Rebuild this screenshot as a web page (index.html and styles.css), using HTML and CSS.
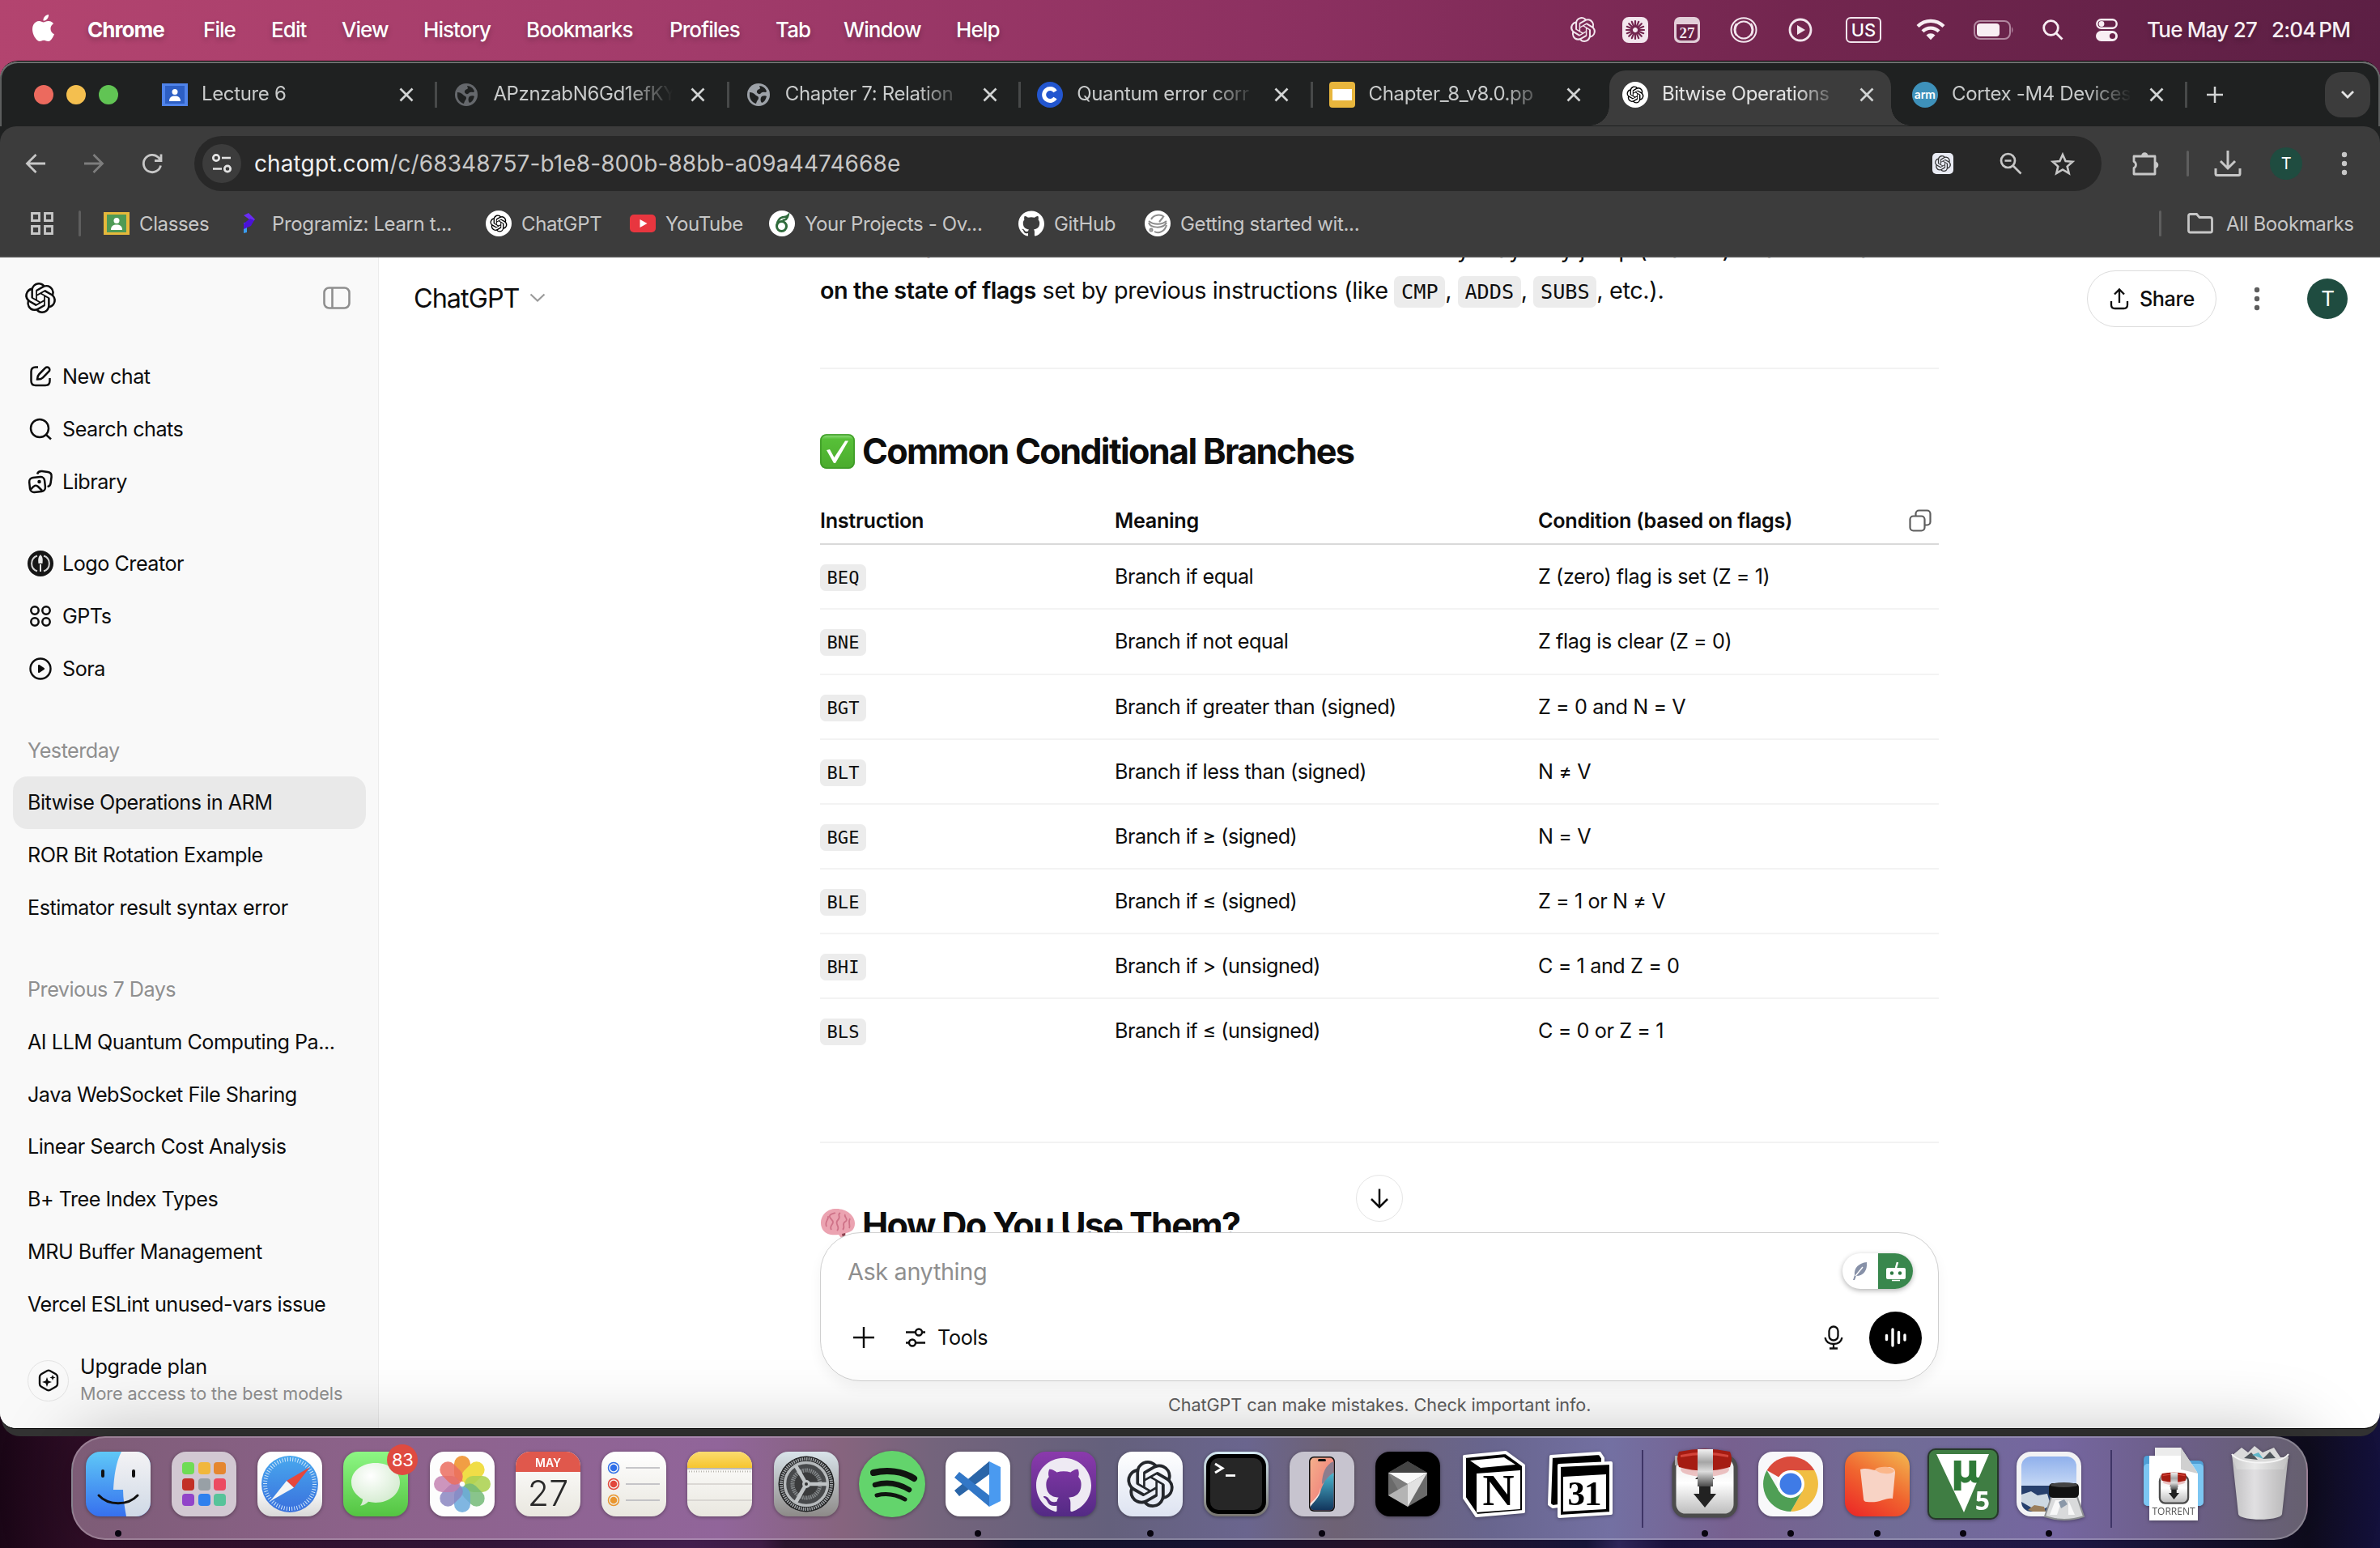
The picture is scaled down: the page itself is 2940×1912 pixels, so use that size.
FILE: index.html
```html
<!DOCTYPE html>
<html lang="en">
<head>
<meta charset="utf-8">
<title>Bitwise Operations in ARM</title>
<link rel="stylesheet" href="styles.css">
</head>
<body>
<svg class="defs" width="0" height="0" aria-hidden="true">
  <defs>
    <symbol id="openai" viewBox="0 0 24 24"><path d="M22.2819 9.8211a5.9847 5.9847 0 0 0-.5157-4.9108 6.0462 6.0462 0 0 0-6.5098-2.9A6.0651 6.0651 0 0 0 4.9807 4.1818a5.9847 5.9847 0 0 0-3.9977 2.9 6.0462 6.0462 0 0 0 .7427 7.0966 5.98 5.98 0 0 0 .511 4.9107 6.051 6.051 0 0 0 6.5146 2.9001A5.9847 5.9847 0 0 0 13.2599 24a6.0557 6.0557 0 0 0 5.7718-4.2058 5.9894 5.9894 0 0 0 3.9977-2.9001 6.0557 6.0557 0 0 0-.7475-7.0729zm-9.022 12.6081a4.4755 4.4755 0 0 1-2.8764-1.0408l.1419-.0804 4.7783-2.7582a.7948.7948 0 0 0 .3927-.6813v-6.7369l2.02 1.1686a.071.071 0 0 1 .038.052v5.5826a4.504 4.504 0 0 1-4.4945 4.4944zm-9.6607-4.1254a4.4708 4.4708 0 0 1-.5346-3.0137l.142.0852 4.783 2.7582a.7712.7712 0 0 0 .7806 0l5.8428-3.3685v2.3324a.0804.0804 0 0 1-.0332.0615L9.74 19.9502a4.4992 4.4992 0 0 1-6.1408-1.6464zM2.3408 7.8956a4.485 4.485 0 0 1 2.3655-1.9728V11.6a.7664.7664 0 0 0 .3879.6765l5.8144 3.3543-2.0201 1.1685a.0757.0757 0 0 1-.071 0l-4.8303-2.7865A4.504 4.504 0 0 1 2.3408 7.872zm16.5963 3.8558L13.1038 8.364 15.1192 7.2a.0757.0757 0 0 1 .071 0l4.8303 2.7913a4.4944 4.4944 0 0 1-.6765 8.1042v-5.6772a.79.79 0 0 0-.407-.667zm2.0107-3.0231l-.142-.0852-4.7735-2.7818a.7759.7759 0 0 0-.7854 0L9.409 9.2297V6.8974a.0662.0662 0 0 1 .0284-.0615l4.8303-2.7866a4.4992 4.4992 0 0 1 6.6802 4.66zM8.3065 12.863l-2.02-1.1638a.0804.0804 0 0 1-.038-.0567V6.0742a4.4992 4.4992 0 0 1 7.3757-3.4537l-.142.0805L8.704 5.459a.7948.7948 0 0 0-.3927.6813zm1.0976-2.3654l2.602-1.4998 2.6069 1.4998v2.9994l-2.5974 1.4997-2.6067-1.4997Z"/></symbol>
    <symbol id="github" viewBox="0 0 24 24"><path d="M12 .297c-6.63 0-12 5.373-12 12 0 5.303 3.438 9.8 8.205 11.385.6.113.82-.258.82-.577 0-.285-.01-1.04-.015-2.04-3.338.724-4.042-1.61-4.042-1.61C4.422 18.07 3.633 17.7 3.633 17.7c-1.087-.744.084-.729.084-.729 1.205.084 1.838 1.236 1.838 1.236 1.07 1.835 2.809 1.305 3.495.998.108-.776.417-1.305.76-1.605-2.665-.3-5.466-1.332-5.466-5.93 0-1.31.465-2.38 1.235-3.22-.135-.303-.54-1.523.105-3.176 0 0 1.005-.322 3.3 1.23.96-.267 1.98-.399 3-.405 1.02.006 2.04.138 3 .405 2.28-1.552 3.285-1.23 3.285-1.23.645 1.653.24 2.873.12 3.176.765.84 1.23 1.91 1.23 3.22 0 4.61-2.805 5.625-5.475 5.92.42.36.81 1.096.81 2.22 0 1.606-.015 2.896-.015 3.286 0 .315.21.69.825.57C20.565 22.092 24 17.592 24 12.297c0-6.627-5.373-12-12-12"/></symbol>
    <symbol id="close" viewBox="0 0 24 24"><path d="M4.5 4.500l15 15M19.500 4.500l-15 15" fill="none" stroke="#d2d4d4" stroke-width="2.700"/></symbol>
    <symbol id="globe" viewBox="0 0 28 28"><circle cx="14" cy="14" r="14" fill="currentColor"/><path d="M3 11c3 0 5 1 7 3 1 2 4 1 4 4 0 2-2 3-3 7-4-1-8-5-8-10zM15 3c4 0 8 3 9 7-2 2-3 0-5 1-2 0-2 3-5 2-2-1-3-3-1-5 1-1 3-1 3-2zM18 16c2-1 5-1 6 0-1 4-3 7-6 8-2-2-2-6 0-8z" fill="#1f2121"/></symbol>
    <symbol id="transmission" viewBox="0 0 80 80">
      <rect x="2" y="6" width="76" height="73" rx="14" fill="url(#metal)" stroke="#4c4c4c" stroke-width="5"/>
      <ellipse cx="40" cy="22" rx="30" ry="9" fill="#c22" opacity=".25"/>
      <path d="M40 22l12 12h-5v18h7L40 69 26 52h7V34h-5z" fill="#222"/>
      <path d="M3 5h8v12H3z" fill="#aaa"/>
      <path d="M8 0Q40-7 71 0Q75 8 71 19Q40 28 8 19Q4 8 8 0z" fill="#a51c12"/>
      <path d="M10 4Q40-3 69 4v3Q40 1 10 7z" fill="#d4453a"/>
      <path d="M31-3h19v46H31z" fill="url(#steel)"/>
    </symbol>
    <linearGradient id="metal" x1="0" y1="0" x2="0" y2="1"><stop offset="0" stop-color="#e8e8e8"/><stop offset=".45" stop-color="#fff"/><stop offset="1" stop-color="#b9b9b9"/></linearGradient>
    <linearGradient id="steel" x1="0" y1="0" x2="0" y2="1"><stop offset="0" stop-color="#f2f2f2"/><stop offset=".35" stop-color="#a5a5a5"/><stop offset=".6" stop-color="#ddd"/><stop offset="1" stop-color="#4a4a4a"/></linearGradient>
    <linearGradient id="g-finder" x1="0" y1="0" x2="0" y2="1"><stop offset="0" stop-color="#5fc8f7"/><stop offset="1" stop-color="#3670ee"/></linearGradient>
    <linearGradient id="g-face" x1="0" y1="0" x2="0" y2="1"><stop offset="0" stop-color="#f4f3f5"/><stop offset="1" stop-color="#cfd9e6"/></linearGradient>
    <linearGradient id="g-white" x1="0" y1="0" x2="0" y2="1"><stop offset="0" stop-color="#fff"/><stop offset=".6" stop-color="#fafafa"/><stop offset="1" stop-color="#d8d8d8"/></linearGradient>
    <linearGradient id="g-blue" x1="0" y1="0" x2="0" y2="1"><stop offset="0" stop-color="#48a8ee"/><stop offset="1" stop-color="#3a70dd"/></linearGradient>
    <linearGradient id="g-green" x1="0" y1="0" x2="0" y2="1"><stop offset="0" stop-color="#8df784"/><stop offset="1" stop-color="#54c442"/></linearGradient>
    <radialGradient id="g-bubble" cx=".4" cy=".3" r=".8"><stop offset="0" stop-color="#fff"/><stop offset="1" stop-color="#cde8c8"/></radialGradient>
    <linearGradient id="g-note" x1="0" y1="0" x2="0" y2="1"><stop offset="0" stop-color="#fbdc6f"/><stop offset="1" stop-color="#f6c52f"/></linearGradient>
    <linearGradient id="g-paper" x1="0" y1="0" x2="0" y2="1"><stop offset="0" stop-color="#fff"/><stop offset="1" stop-color="#e9e7df"/></linearGradient>
    <linearGradient id="g-set" x1="0" y1="0" x2="0" y2="1"><stop offset="0" stop-color="#d9e4ea"/><stop offset="1" stop-color="#8d8a88"/></linearGradient>
    <linearGradient id="g-gh" x1="0" y1="0" x2="0" y2="1"><stop offset="0" stop-color="#8b3aac"/><stop offset="1" stop-color="#532a84"/></linearGradient>
    <linearGradient id="g-ai" x1="0" y1="0" x2="0" y2="1"><stop offset="0" stop-color="#fff"/><stop offset="1" stop-color="#dde3f1"/></linearGradient>
    <linearGradient id="g-term" x1="0" y1="0" x2="0" y2="1"><stop offset="0" stop-color="#d5eaf3"/><stop offset="1" stop-color="#76736f"/></linearGradient>
    <linearGradient id="g-cup" x1=".8" y1="0" x2=".2" y2="1"><stop offset="0" stop-color="#f2ad4b"/><stop offset=".5" stop-color="#f0652f"/><stop offset="1" stop-color="#ec2d27"/></linearGradient>
    <linearGradient id="g-sky" x1="0" y1="0" x2="0" y2="1"><stop offset="0" stop-color="#8fb0ec"/><stop offset="1" stop-color="#c5d8f5"/></linearGradient>
    <linearGradient id="g-check" x1="0" y1="0" x2="0" y2="1"><stop offset="0" stop-color="#9be38a"/><stop offset=".15" stop-color="#57c038"/><stop offset="1" stop-color="#4bab2d"/></linearGradient>
    <linearGradient id="g-phone" x1="0" y1="0" x2="1" y2="1"><stop offset="0" stop-color="#f5b08c"/><stop offset="1" stop-color="#ee6d74"/></linearGradient>
    <linearGradient id="g-sea" x1="0" y1="0" x2="0" y2="1"><stop offset="0" stop-color="#4cb8d0"/><stop offset="1" stop-color="#12355c"/></linearGradient>
    <linearGradient id="g-bin" x1="0" y1="0" x2="1" y2="0"><stop offset="0" stop-color="#c9c9c9"/><stop offset=".4" stop-color="#ececec"/><stop offset="1" stop-color="#bfbfbf"/></linearGradient>
  </defs>
</svg>

<header class="menubar">
  <nav class="menus">
    <svg class="apple" viewBox="2 0 20 24"><path fill="#fff" d="M12.152 6.896c-.948 0-2.415-1.078-3.96-1.04-2.04.027-3.91 1.183-4.961 3.014-2.117 3.675-.546 9.103 1.519 12.09 1.013 1.454 2.208 3.09 3.792 3.039 1.52-.065 2.09-.987 3.935-.987 1.831 0 2.35.987 3.96.948 1.637-.026 2.676-1.48 3.676-2.948 1.156-1.688 1.636-3.325 1.662-3.415-.039-.013-3.182-1.221-3.22-4.857-.026-3.04 2.48-4.494 2.597-4.559-1.429-2.09-3.623-2.324-4.39-2.376-2-.156-3.675 1.09-4.61 1.09zM15.53 3.83c.843-1.012 1.4-2.427 1.245-3.83-1.207.052-2.662.805-3.532 1.818-.78.896-1.454 2.338-1.273 3.714 1.338.104 2.715-.688 3.559-1.701"/></svg>
    <b>Chrome</b><span>File</span><span>Edit</span><span>View</span><span>History</span><span>Bookmarks</span><span>Profiles</span><span>Tab</span><span>Window</span><span>Help</span>
  </nav>
  <div class="status">
    <svg width="31" height="31"><use href="#openai" fill="#f3e6ee"/></svg>
    <svg width="32" height="32" viewBox="0 0 32 32"><rect width="32" height="32" rx="8" fill="#f3e6ee"/><g stroke="#73264f" stroke-width="2.200" stroke-linecap="round"><path d="M16 5v7M16 20v7M5 16h7M20 16h7M8.200 8.200l5 5M18.800 18.800l5 5M23.800 8.200l-5 5M13.200 18.800l-5 5M11.800 5.800l2.700 6.500M20.200 26.200l-2.700-6.500M5.800 20.200l6.500-2.700M26.200 11.800l-6.500 2.700M5.800 11.800l6.500 2.700M26.200 20.200l-6.500-2.700M11.800 26.200l2.700-6.500M20.200 5.800l-2.700 6.500"/></g></svg>
    <svg width="32" height="32" viewBox="0 0 32 32"><rect width="32" height="32" rx="7" fill="#e3cfd9"/><path d="M3 9h26v15a5 5 0 0 1-5 5H8a5 5 0 0 1-5-5z" fill="#6d234a"/><text x="16" y="26" class="mini-date">27</text></svg>
    <svg width="34" height="32" viewBox="0 0 34 32" fill="none" stroke="#f3e6ee" stroke-width="2"><ellipse cx="17" cy="16" rx="15.500" ry="14.800"/><circle cx="17" cy="16" r="10.500"/><path d="M8 8a12.500 12.500 0 0 0 0 15M26 8a12.500 12.500 0 0 1 0 15"/></svg>
    <svg width="30" height="30" viewBox="0 0 30 30"><circle cx="15" cy="15" r="13" fill="none" stroke="#f3e6ee" stroke-width="2.800"/><path d="M11 9l10 6-10 6z" fill="#f3e6ee"/></svg>
    <div class="input-source">US</div>
    <svg width="36" height="27" viewBox="0 0 36 27" fill="none" stroke="#f8eef3" stroke-width="4.200"><path d="M2 9.500a22.500 22.500 0 0 1 32 0M8 15.800a14 14 0 0 1 20 0"/><path d="M12.500 20.500a8 8 0 0 1 11 0L18 26.200z" fill="#f8eef3" stroke="none"/></svg>
    <svg width="50" height="24" viewBox="0 0 50 24"><rect x="1" y="1" width="44" height="22" rx="7" fill="none" stroke="#b287a0" stroke-width="2"/><rect x="4" y="4" width="28" height="16" rx="4" fill="#f8eef3"/><path d="M47 8q3 4 0 8z" fill="#b287a0"/></svg>
    <svg width="26" height="26" viewBox="0 0 26 26" fill="none" stroke="#f8eef3" stroke-width="2.800"><circle cx="10.500" cy="10.500" r="8.800"/><path d="M17 17l7.500 7.500"/></svg>
    <svg width="27" height="28" viewBox="0 0 27 28"><rect x="1.300" y="1.300" width="24.400" height="10.400" rx="5.200" fill="none" stroke="#f8eef3" stroke-width="2.400"/><circle cx="7" cy="6.500" r="3.400" fill="#f8eef3"/><rect y="15" width="27" height="13" rx="6.500" fill="#f8eef3"/><circle cx="20.500" cy="21.500" r="3.600" fill="#6a2249"/></svg>
    <time><span>Tue May 27</span><span>2:04&#8201;PM</span></time>
  </div>
</header>

<main class="window">
  <div class="tabstrip">
    <div class="lights"><i class="red"></i><i class="amber"></i><i class="green"></i></div>
    <div class="tab"><svg class="fav" viewBox="0 0 32 32"><rect y="2" width="32" height="28" fill="#4f83ea"/><rect x="4" y="5" width="24" height="22" fill="#2d5fc4"/><circle cx="16" cy="12.500" r="3.500" fill="#fff"/><path d="M9 24c0-5 3-6.500 7-6.500s7 1.500 7 6.500z" fill="#fff"/></svg><span>Lecture 6</span><svg class="x"><use href="#close"/></svg></div>
    <div class="tab"><svg class="fav dim"><use href="#globe" x="2" y="2" width="28" height="28"/></svg><span>APznzabN6Gd1efKY</span><svg class="x"><use href="#close"/></svg></div>
    <div class="tab"><svg class="fav lit"><use href="#globe" x="2" y="2" width="28" height="28"/></svg><span>Chapter 7: Relation</span><svg class="x"><use href="#close"/></svg></div>
    <div class="tab"><svg class="fav" viewBox="0 0 32 32"><circle cx="16" cy="16" r="16" fill="#2356cf"/><path d="M22.500 12A7.500 7.500 0 1 0 22.500 20" fill="none" stroke="#fff" stroke-width="5"/></svg><span>Quantum error corr</span><svg class="x"><use href="#close"/></svg></div>
    <div class="tab last"><svg class="fav" viewBox="0 0 32 32"><rect width="32" height="32" rx="4" fill="#e8b63d"/><rect x="4" y="9" width="24" height="14" fill="#fff"/></svg><span>Chapter_8_v8.0.pp</span><svg class="x"><use href="#close"/></svg></div>
    <div class="tab active"><svg class="fav" viewBox="0 0 32 32"><circle cx="16" cy="16" r="16" fill="#fff"/><use href="#openai" x="5.500" y="5.500" width="21" height="21"/></svg><span>Bitwise Operations</span><svg class="x"><use href="#close"/></svg></div>
    <div class="tab"><svg class="fav" viewBox="0 0 32 32"><circle cx="16" cy="16" r="16" fill="#3e91ba"/><text x="16" y="20.500" class="arm">arm</text></svg><span>Cortex -M4 Devices</span><svg class="x"><use href="#close"/></svg></div>
    <svg class="newtab" viewBox="0 0 24 24"><path d="M12 2v20M2 12h20" stroke="#d2d4d4" stroke-width="2.500"/></svg>
    <div class="tabsearch"><svg width="18" height="12" viewBox="0 0 18 12"><path d="M2 2l7 7 7-7" fill="none" stroke="#e3e3e3" stroke-width="2.800"/></svg></div>
  </div>

  <div class="toolbar">
    <div class="tool"><svg width="26" height="26" viewBox="0 0 26 26" fill="none" stroke="#c7c7c7" stroke-width="2.800"><path d="M25 13H3M13.500 2L2.500 13l11 11"/></svg></div>
    <div class="tool"><svg width="26" height="26" viewBox="0 0 26 26" fill="none" stroke="#7d7d7d" stroke-width="2.800"><path d="M1 13h22M12.500 2l11 11-11 11"/></svg></div>
    <div class="tool"><svg width="26" height="26" viewBox="0 0 26 26" fill="none" stroke="#c7c7c7" stroke-width="2.800"><path d="M23.500 15.500A10.700 10.700 0 1 1 20.500 5.300L23 8M24 1.500V9.500h-8"/></svg></div>
    <div class="omnibox">
      <div class="site"><svg width="26" height="26" viewBox="0 0 26 26" fill="none" stroke="#e3e3e3" stroke-width="2.700"><circle cx="6" cy="6" r="3.700"/><path d="M13 6h11M2 19.500h11"/><circle cx="20" cy="19.500" r="3.700"/></svg></div>
      <p class="url"><em>chatgpt.com</em>/c/68348757-b1e8-800b-88bb-a09a4474668e</p>
      <svg class="o1" width="26" height="26" viewBox="0 0 26 26"><rect width="26" height="26" rx="5" fill="#e9ebf4"/><use href="#openai" x="3" y="3" width="20" height="20" fill="#333"/></svg>
      <svg class="o2" width="28" height="28" viewBox="0 0 28 28" fill="none" stroke="#c7c7c7" stroke-width="2.700"><circle cx="10.500" cy="10.500" r="8.500"/><path d="M6.500 10.500h8M17 17l9.500 9.500"/></svg>
      <svg class="o3" width="30" height="29" viewBox="0 0 30 29" fill="none" stroke="#c7c7c7" stroke-width="2.600"><path d="M15 3l3.600 8 8.600.8-6.500 5.800 2 8.500L15 21.500l-7.700 4.600 2-8.500-6.500-5.800 8.600-.8z"/></svg>
    </div>
    <div class="tool ext"><svg width="34" height="34" viewBox="0 0 34 34"><path d="M3 8h26v22H3v-7.500a4.500 4.500 0 0 0 0-8z" fill="none" stroke="#c7c7c7" stroke-width="2.800" stroke-linejoin="round"/><path d="M12 8a4.300 4.800 0 0 1 8.600 0zM29 14.500a4.300 4.300 0 0 1 0 8.600z" fill="#c7c7c7"/></svg></div>
    <i class="rule"></i>
    <div class="tool"><svg width="34" height="34" viewBox="0 0 34 34" fill="none" stroke="#c7c7c7" stroke-width="3"><path d="M17 1v21M8 14l9 9 9-9M2 23v6.500a2 2 0 0 0 2 2h26a2 2 0 0 0 2-2V23"/></svg></div>
    <div class="tool"><span class="avatar small">T</span></div>
    <div class="tool"><svg width="8" height="30" viewBox="0 0 8 30" fill="#c7c7c7"><circle cx="4" cy="4" r="3.200"/><circle cx="4" cy="15" r="3.200"/><circle cx="4" cy="26" r="3.200"/></svg></div>
  </div>

  <div class="bookmarks">
    <svg class="apps" width="28" height="28" viewBox="0 0 28 28" fill="none" stroke="#c7c7c7" stroke-width="2.800"><path d="M1.500 1.500h9v9h-9zM17.500 1.500h9v9h-9zM1.500 17.500h9v9h-9zM17.500 17.500h9v9h-9z"/></svg>
    <i class="rule"></i>
    <a><svg class="fav" viewBox="0 0 32 32"><rect y="2" width="32" height="28" fill="#e5b83b"/><rect x="4" y="5" width="24" height="22" fill="#4f9a55"/><circle cx="16" cy="12.500" r="3.500" fill="#fff"/><path d="M9 24c0-5 3-6.500 7-6.500s7 1.500 7 6.500z" fill="#fff"/></svg>Classes</a>
    <a><svg class="fav" viewBox="0 0 32 32"><path d="M9 6l6-3 8 8-7 8-3-1 3-7z" fill="#6a2cf5"/><path d="M9 15l4 1v11l-4 1z" fill="#3a9df0"/><path d="M9 16l8-6 5 2-4 7-9 4z" fill="#4b12d8"/></svg>Programiz: Learn t...</a>
    <a><svg class="fav" viewBox="0 0 32 32"><circle cx="16" cy="16" r="16" fill="#fff"/><use href="#openai" x="5.500" y="5.500" width="21" height="21"/></svg>ChatGPT</a>
    <a><svg class="fav" viewBox="0 0 32 32"><rect y="5" width="32" height="22" rx="5" fill="#e8363f"/><path d="M12.500 11l9 5-9 5z" fill="#fff"/></svg>YouTube</a>
    <a><svg class="fav" viewBox="0 0 32 32"><circle cx="16" cy="16" r="16" fill="#fff"/><circle cx="15.500" cy="19.500" r="6" fill="none" stroke="#2f6b3c" stroke-width="3"/><path d="M9.500 19c0-6 4-11 9-11 2 0 4-1 5-2-1 5-4 6-7 6" fill="none" stroke="#2f6b3c" stroke-width="2.600"/></svg>Your Projects - Ov...</a>
    <a><svg class="fav"><use href="#github" fill="#fff" width="32" height="32"/></svg>GitHub</a>
    <a><svg class="fav" viewBox="0 0 32 32"><circle cx="16" cy="16" r="16" fill="#fff"/><g fill="none" stroke="#8c8c8c" stroke-width="2"><path d="M5 13c6 5 16 5 22 0M5 15c2 7 18 8 22 0M8 11C11 5 20 4 24 8M12 26c5 3 13 0 15-8M18 14l5-6"/><circle cx="8" cy="24" r="1.500"/></g></svg>Getting started wit...</a>
    <i class="rule end"></i>
    <a class="all"><svg width="32" height="26" viewBox="0 0 32 26" fill="none" stroke="#c7c7c7" stroke-width="2.800"><path d="M1.500 22V3.500a2 2 0 0 1 2-2h8l3.500 4H28a2.500 2.500 0 0 1 2.500 2.500v14a2 2 0 0 1-2 2h-25a2 2 0 0 1-2-2z"/></svg>All Bookmarks</a>
  </div>

  <div class="page">
    <aside class="sidebar">
      <div class="side-head"><svg width="38" height="38"><use href="#openai" fill="#0d0d0d"/></svg>
        <svg width="34" height="28" viewBox="0 0 34 28" fill="none" stroke="#8f8f8f" stroke-width="2.600"><rect x="1.500" y="1.500" width="31" height="25" rx="6"/><path d="M11.500 2v24"/></svg></div>
      <nav class="group">
        <a><svg class="ico" viewBox="0 0 32 32" fill="none" stroke="#0d0d0d" stroke-width="2.500"><path d="M13 4.500H10C6.500 4.500 4.500 6.500 4.500 10v11.500c0 3.500 2 5.500 5.500 5.500h12c3.500 0 5.500-2 5.500-5.500V18"/><path d="M12 19.500c0-3 .5-4.500 2.500-6.500l7.500-7.500a3 3 0 0 1 4.500 4.200L19 17.300c-2 2-4 2.400-7 2.200z"/></svg>New chat</a>
        <a><svg class="ico" viewBox="0 0 32 32" fill="none" stroke="#0d0d0d" stroke-width="2.500"><circle cx="15" cy="15" r="11"/><path d="M23 23l6 5.500"/></svg>Search chats</a>
        <a><svg class="ico" viewBox="0 0 32 32" fill="none" stroke="#0d0d0d" stroke-width="2.500"><rect x="2.500" y="10.500" width="19" height="18" rx="5" transform="rotate(-6 12 19)"/><path d="M12 6.500c1-3 3-3.700 6-3.400l7 .9c3.500.5 5 2.500 4.600 6l-1 7.500c-.3 2.500-1.600 4-4 4.600"/><path d="M4 25.500c4-5 6.500-6 9-3.500l5 5"/><circle cx="14.500" cy="16" r="1" fill="#0d0d0d"/></svg>Library</a>
      </nav>
      <nav class="group">
        <a><svg class="ico" viewBox="0 0 32 32"><circle cx="16" cy="16" r="16" fill="#161616"/><path d="M12 6.500a10 10 0 0 0 0 19M20 6.500a10 10 0 0 1 0 19" fill="none" stroke="#d5d5d5" stroke-width="2"/><path d="M16 5c3 3 3 6 2.500 11h-5C13 11 13 8 16 5zM15 17h2v9h-2z" fill="#e8e8e8"/></svg>Logo Creator</a>
        <a><svg class="ico" viewBox="0 0 32 32" fill="none" stroke="#0d0d0d" stroke-width="2.500"><circle cx="9" cy="9" r="4.700"/><circle cx="23" cy="9" r="4.700"/><circle cx="9" cy="23" r="4.700"/><circle cx="23" cy="23" r="4.700"/></svg>GPTs</a>
        <a><svg class="ico" viewBox="0 0 32 32"><circle cx="16" cy="16" r="12.500" fill="none" stroke="#0d0d0d" stroke-width="2.400"/><path d="M13 12c0-1 .8-1.300 1.500-.9l6 4c.8.500.8 1.300 0 1.800l-6 4c-.7.400-1.500 0-1.500-.9z" fill="#0d0d0d"/></svg>Sora</a>
      </nav>
      <nav class="group">
        <h3>Yesterday</h3>
        <a class="current">Bitwise Operations in ARM</a>
        <a>ROR Bit Rotation Example</a>
        <a>Estimator result syntax error</a>
      </nav>
      <nav class="group">
        <h3>Previous 7 Days</h3>
        <a>AI LLM Quantum Computing Pa...</a>
        <a>Java WebSocket File Sharing</a>
        <a>Linear Search Cost Analysis</a>
        <a>B+ Tree Index Types</a>
        <a>MRU Buffer Management</a>
        <a>Vercel ESLint unused-vars issue</a>
      </nav>
      <div class="upgrade">
        <span class="badge"><svg width="28" height="28" viewBox="0 0 28 28"><path d="M12 2.200a4 4 0 0 1 4 0l7 4a4 4 0 0 1 2 3.500v8.600a4 4 0 0 1-2 3.500l-7 4a4 4 0 0 1-4 0l-7-4a4 4 0 0 1-2-3.500V9.700a4 4 0 0 1 2-3.500z" fill="none" stroke="#0d0d0d" stroke-width="2.400"/><path d="M12 10l1.600 4.400L18 16l-4.400 1.600L12 22l-1.600-4.400L6 16l4.400-1.600zM19 7l1 2.500 2.500 1L20 11.500 19 14l-1-2.500-2.500-1 2.500-1z" fill="#0d0d0d"/></svg></span>
        <div><strong>Upgrade plan</strong><small>More access to the best models</small></div>
      </div>
    </aside>

    <section class="chat">
      <div class="model">ChatGPT<svg width="20" height="12" viewBox="0 0 20 12"><path d="M1.500 1.500l8.500 8 8.500-8" fill="none" stroke="#9b9b9b" stroke-width="2.200"/></svg></div>
      <div class="thread">
        <article class="conversation">
          <p>Conditional instructions let the control unit decide when they may only jump (branch) to another label<br><strong>on the state of flags</strong> set by previous instructions (like <code>CMP</code>, <code>ADDS</code>, <code>SUBS</code>, etc.).</p>
          <hr>
          <h2><svg width="43" height="43" viewBox="0 0 43 43"><rect width="43" height="43" rx="8" fill="url(#g-check)"/><rect x="1" y="1" width="41" height="41" rx="7" fill="none" stroke="#3f9a28" stroke-width="1.500"/><path d="M8 20l4-1 5.500 10L31 8.500h4L19 36h-2z" fill="#fff"/></svg>Common Conditional Branches</h2>
          <table>
            <thead><tr><th>Instruction</th><th>Meaning</th><th><div class="last-head">Condition (based on flags)<svg width="28" height="28" viewBox="0 0 28 28" fill="none" stroke="#5d5d5d" stroke-width="2.200"><rect x="1.500" y="8.500" width="18" height="18" rx="4"/><path d="M8.500 8V5.500a4 4 0 0 1 4-4h10a4 4 0 0 1 4 4v10a4 4 0 0 1-4 4H20"/></svg></div></th></tr></thead>
            <tbody>
              <tr><td><code>BEQ</code></td><td>Branch if equal</td><td>Z (zero) flag is set (Z = 1)</td></tr>
              <tr><td><code>BNE</code></td><td>Branch if not equal</td><td>Z flag is clear (Z = 0)</td></tr>
              <tr><td><code>BGT</code></td><td>Branch if greater than (signed)</td><td>Z = 0 and N = V</td></tr>
              <tr><td><code>BLT</code></td><td>Branch if less than (signed)</td><td>N ≠ V</td></tr>
              <tr><td><code>BGE</code></td><td>Branch if ≥ (signed)</td><td>N = V</td></tr>
              <tr><td><code>BLE</code></td><td>Branch if ≤ (signed)</td><td>Z = 1 or N ≠ V</td></tr>
              <tr><td><code>BHI</code></td><td>Branch if &gt; (unsigned)</td><td>C = 1 and Z = 0</td></tr>
              <tr><td><code>BLS</code></td><td>Branch if ≤ (unsigned)</td><td>C = 0 or Z = 1</td></tr>
            </tbody>
          </table>
          <hr class="wide">
          <h2><svg width="43" height="43" viewBox="0 0 43 43"><path d="M2 25C-2 14 6 3 18 2c14-1 25 8 25 18 0 8-5 11-11 12l-1 2 1 6-3 2-6-8C14 35 5 34 2 25z" fill="#eba3b1"/><path d="M8 24c-3-6 3-8 2-13M14 28c-4-6 6-7 0-13s2-7 5-8M21 29c5-5-4-8 1-13s-2-6 3-9M28 28c4-4-2-7 3-10s-2-6 0-9M36 26c2-4-2-7 1-12" fill="none" stroke="#cf7288" stroke-width="1.800"/><path d="M27 33l4-1 1 8-3 2z" fill="#8d4350"/></svg>How Do You Use Them?</h2>
        </article>
        <div class="composer">
          <button class="down"><svg width="24" height="26" viewBox="0 0 24 26" fill="none" stroke="#0d0d0d" stroke-width="2.500"><path d="M12 1.500v22M2 14l10 10 10-10"/></svg></button>
          <div class="ask"><span>Ask anything</span>
            <div class="assist"><span><svg width="22" height="26" viewBox="0 0 22 26"><path d="M19 2C9 3 3 9 4 18l-2 6h2l2-5c9 0 14-7 13-17z" fill="#8791a8"/><path d="M5 19L14 8" stroke="#fff" stroke-width="1.400"/></svg></span><span class="bot"><svg width="26" height="26" viewBox="0 0 26 26"><rect x="1" y="9" width="24" height="14" rx="2" fill="#fff"/><path d="M13 9l2-7" stroke="#fff" stroke-width="2.500"/><circle cx="8" cy="15.500" r="2.200" fill="#2e7a43"/><circle cx="18" cy="15.500" r="2.200" fill="#2e7a43"/><path d="M8 24.500h10" stroke="#fff" stroke-width="1.500"/></svg></span></div></div>
          <div class="actions">
            <svg class="plus" width="26" height="26" viewBox="0 0 26 26"><path d="M13 0v26M0 13h26" stroke="#0d0d0d" stroke-width="2.400"/></svg>
            <svg class="sliders" width="26" height="26" viewBox="0 0 26 26" fill="none" stroke="#0d0d0d" stroke-width="2.400"><circle cx="17" cy="6.500" r="4"/><path d="M1 6.500h12M21 6.500h4M1 19.500h4M13 19.500h12"/><circle cx="9" cy="19.500" r="4"/></svg>
            <span>Tools</span>
            <svg class="mic" width="24" height="30" viewBox="0 0 24 30" fill="none" stroke="#0d0d0d" stroke-width="2.300"><rect x="6.500" y="1.500" width="11" height="17" rx="5.500"/><path d="M1.500 15c1 5 5 8 10.500 8s9.500-3 10.500-8M12 23v5.500M7 28.500h10"/></svg>
            <button class="voice"><svg width="28" height="26" viewBox="0 0 28 26" stroke="#fff" stroke-width="3.400" stroke-linecap="round"><path d="M2.500 10.500v5M10 3v20M17.500 6.500v13M25 10v6"/></svg></button>
          </div>
        </div>
        <p class="notice">ChatGPT can make mistakes. Check important info.</p>
      </div>
      <div class="account">
        <button class="share"><svg width="24" height="28" viewBox="0 0 24 28" fill="none" stroke="#0d0d0d" stroke-width="2.300"><path d="M12 19V3M6 8.500l6-6 6 6M2 17v4.500c0 3 1.500 4.500 4.500 4.500h11c3 0 4.500-1.500 4.500-4.500V17"/></svg>Share</button>
        <svg class="more" width="8" height="30" viewBox="0 0 8 30" fill="#5d5d5d"><circle cx="4" cy="4" r="3.200"/><circle cx="4" cy="15" r="3.200"/><circle cx="4" cy="26" r="3.200"/></svg>
        <span class="avatar">T</span>
      </div>
    </section>
  </div>
</main>
<div class="behind"></div>

<footer class="dock">
  <div class="app open"><svg viewBox="0 0 80 80"><rect width="80" height="80" rx="18" fill="url(#g-finder)"/><path d="M44 0h18a18 18 0 0 1 18 18v44a18 18 0 0 1-18 18H50c-2-11-4-22-4-33H34C35 30 37 14 44 0z" fill="url(#g-face)"/><path d="M21 24v6M59 24v6" stroke="#111" stroke-width="4" stroke-linecap="round"/><path d="M16 54c12 13 36 13 48 0" fill="none" stroke="#111" stroke-width="3" stroke-linecap="round"/></svg></div>
  <div class="app"><svg viewBox="0 0 80 80"><rect width="80" height="80" rx="18" fill="#d2c8d2"/><g><rect x="13" y="13" width="15" height="15" rx="4" fill="#6fdc55"/><rect x="33" y="13" width="15" height="15" rx="4" fill="#f1b73c"/><rect x="52" y="13" width="15" height="15" rx="4" fill="#e5862f"/><rect x="13" y="33" width="15" height="15" rx="4" fill="#c22f26"/><rect x="33" y="33" width="15" height="15" rx="4" fill="#98a0a6"/><rect x="52" y="33" width="15" height="15" rx="4" fill="#ec4a62"/><rect x="13" y="52" width="15" height="15" rx="4" fill="#9144c9"/><rect x="33" y="52" width="15" height="15" rx="4" fill="#2f80ee"/><rect x="52" y="52" width="15" height="15" rx="4" fill="#57c39a"/></g></svg></div>
  <div class="app"><svg viewBox="0 0 80 80"><rect width="80" height="80" rx="18" fill="url(#g-white)"/><circle cx="40" cy="40" r="35" fill="url(#g-blue)"/><circle cx="40" cy="40" r="30.500" fill="none" stroke="#cfe6fa" stroke-width="5" stroke-dasharray="1 2.190"/><path d="M65 19L45 44.500 36 36z" fill="#e5473c"/><path d="M16 61l20-25 9 8.500z" fill="#f5f5f5"/></svg></div>
  <div class="app"><svg viewBox="0 0 80 80"><rect width="80" height="80" rx="18" fill="url(#g-green)"/><path d="M40 14c17 0 30 10 30 24S57 63 40 63c-3 0-6-.5-9-1.200-3 3-6 4.500-10 5 2-3 3-5 3-8C16 54 10 47 10 38c0-14 13-24 30-24z" fill="url(#g-bubble)"/></svg><span class="count">83</span></div>
  <div class="app"><svg viewBox="0 0 80 80"><rect width="80" height="80" rx="18" fill="#fdfdfd"/><g transform="translate(40 40)" opacity=".88"><rect x="-10" y="-35" width="20" height="32" rx="10" fill="#f0922b"/><rect x="-10" y="-35" width="20" height="32" rx="10" fill="#efd92e" transform="rotate(45)"/><rect x="-10" y="-35" width="20" height="32" rx="10" fill="#a3cc3d" transform="rotate(90)" opacity=".9"/><rect x="-10" y="-35" width="20" height="32" rx="10" fill="#62b266" transform="rotate(135)" opacity=".85"/><rect x="-10" y="-35" width="20" height="32" rx="10" fill="#569dd8" transform="rotate(180)" opacity=".85"/><rect x="-10" y="-35" width="20" height="32" rx="10" fill="#7a76b8" transform="rotate(225)" opacity=".85"/><rect x="-10" y="-35" width="20" height="32" rx="10" fill="#b96aa3" transform="rotate(270)" opacity=".8"/><rect x="-10" y="-35" width="20" height="32" rx="10" fill="#e95a4a" transform="rotate(315)" opacity=".85"/></g></svg></div>
  <div class="app"><svg viewBox="0 0 80 80"><rect width="80" height="80" rx="18" fill="url(#g-paper)"/><path d="M0 25v-7A18 18 0 0 1 18 0h44a18 18 0 0 1 18 18v7z" fill="#e0584c"/><text x="40" y="19" class="cal-month">MAY</text><text x="40" y="67" class="cal-day">27</text></svg></div>
  <div class="app"><svg viewBox="0 0 80 80"><rect width="80" height="80" rx="18" fill="url(#g-paper)"/><g stroke="#b5b5ba" stroke-width="1.600"><path d="M30 20h42M30 40h42M30 60h42"/></g><g fill="none" stroke-width="1.500"><circle cx="15" cy="20" r="6.500" stroke="#2f6fe8"/><circle cx="15" cy="40" r="6.500" stroke="#e2473b"/><circle cx="15" cy="60" r="6.500" stroke="#e9962f"/></g><circle cx="15" cy="20" r="4.300" fill="#2f6fe8"/><circle cx="15" cy="40" r="4.300" fill="#e2473b"/><circle cx="15" cy="60" r="4.300" fill="#e9962f"/></svg></div>
  <div class="app"><svg viewBox="0 0 80 80"><rect width="80" height="80" rx="18" fill="url(#g-paper)"/><path d="M0 20v-2A18 18 0 0 1 18 0h44a18 18 0 0 1 18 18v2z" fill="url(#g-note)"/><path d="M0 21h80" stroke="#a9a6a0" stroke-width="1.500"/><path d="M2 24.500h76" stroke="#b8b5af" stroke-width="2" stroke-dasharray="1 2"/><path d="M0 40h80M0 60h80" stroke="#d2d0cc" stroke-width="1.500"/></svg></div>
  <div class="app"><svg viewBox="0 0 80 80"><rect width="80" height="80" rx="18" fill="url(#g-set)"/><circle cx="40" cy="40" r="34.500" fill="#1f2021"/><circle cx="40" cy="40" r="31" fill="none" stroke="#9fa3a6" stroke-width="4" stroke-dasharray="1.600 1.100"/><circle cx="40" cy="40" r="26.500" fill="#47494b" stroke="#b5b9bb" stroke-width="3.500"/><circle cx="40" cy="40" r="17" fill="#3a3b3c" stroke="#85898b" stroke-width="5" stroke-dasharray="1.500 1"/><path d="M40 40h26M40 40L27 17.500M40 40L27 62.500" stroke="#bfc3c5" stroke-width="4.500"/><circle cx="40" cy="40" r="5" fill="#bfc3c5"/><circle cx="40" cy="40" r="2" fill="#333"/></svg></div>
  <div class="app"><svg viewBox="0 0 80 80"><circle cx="40" cy="40" r="41" fill="#63d46c"/><g fill="none" stroke="#101510" stroke-linecap="round"><path d="M17 26c17-4 36-2 50 7" stroke-width="8"/><path d="M19 41c14-4 29-2 42 6" stroke-width="6.500"/><path d="M21 54c12-3 24-1 35 5" stroke-width="5"/></g></svg></div>
  <div class="app open"><svg viewBox="0 0 80 80"><rect width="80" height="80" rx="18" fill="#fff"/><path d="M54 12L11 48l6 7L54 28z" fill="#2a65a8"/><path d="M11 32l6-7 37 29v14z" fill="#3277c7"/><path d="M54 12l14 7v42l-14 7z" fill="#4a9af0"/></svg></div>
  <div class="app"><svg viewBox="0 0 80 80"><rect width="80" height="80" rx="18" fill="url(#g-gh)"/><use href="#github" x="6" y="7" width="68" height="68" fill="#eeeaf3"/></svg></div>
  <div class="app open"><svg viewBox="0 0 80 80"><rect width="80" height="80" rx="18" fill="url(#g-ai)"/><use href="#openai" x="11" y="11" width="58" height="58" fill="#24272c"/></svg></div>
  <div class="app"><svg viewBox="0 0 80 80"><rect width="80" height="80" rx="18" fill="url(#g-term)"/><rect x="3" y="3" width="74" height="74" rx="15" fill="#000"/><rect x="8" y="8" width="64" height="64" rx="10" fill="#262626"/><path d="M14 15l9 5.500-9 5.500" fill="none" stroke="#fff" stroke-width="3"/><path d="M27 29.500h12" stroke="#fff" stroke-width="2.800"/></svg></div>
  <div class="app open"><svg viewBox="0 0 80 80"><rect width="80" height="80" rx="18" fill="#c7c4cf"/><rect x="24" y="6" width="32" height="68" rx="6" fill="#111"/><rect x="25.500" y="7.500" width="29" height="65" rx="5" fill="url(#g-phone)"/><path d="M54.500 12C44 16 40 28 40 40l14.500-10z" fill="#8c7d8e"/><path d="M54.500 26C42 34 40 44 38 50c-2 7-8 11-12.500 16V67.500a5 5 0 0 0 5 5h19a5 5 0 0 0 5-5z" fill="url(#g-sea)"/><path d="M38 44c0 8-6 14-12.500 20v4C32 60 39 54 38 44z" fill="#f4e9e8"/><rect x="35" y="9" width="10" height="3" rx="1.500" fill="#111"/></svg></div>
  <div class="app"><svg viewBox="0 0 80 80"><rect width="80" height="80" rx="18" fill="#000"/><path d="M40 12l24 14v28L40 68 16 54V26z" fill="#6a6a6a"/><path d="M40 12l24 14H16z" fill="#444"/><path d="M16 26h48L40 40z" fill="#fafafa"/><path d="M64 26L40 68V40z" fill="#e2e2e2"/><path d="M16 26l24 14v28z" fill="#8a8a8a" opacity=".6"/><path d="M16 54l24-14v28z" fill="#b4b4b4"/></svg></div>
  <div class="app"><svg viewBox="0 0 80 80"><path d="M3 6L54 1l22 16v57l-58 5L3 57z" fill="#000" stroke="#fff" stroke-width="4" stroke-linejoin="round"/><path d="M10 11l42-4 14 9-43 4z" fill="#fff"/><path d="M18 27l54-4v48l-54 4z" fill="#fff"/><text x="45" y="66" class="notion">N</text></svg></div>
  <div class="app"><svg viewBox="0 0 80 80"><path d="M4 6l60-4 4 6v52l-62 8-4-3z" fill="#000" stroke="#fff" stroke-width="4" stroke-linejoin="round"/><path d="M14 17l64-3v62l-64 4z" fill="#000" stroke="#fff" stroke-width="4" stroke-linejoin="round"/><path d="M19 31l53-3v43l-53 3z" fill="#fff"/><text x="45" y="66" class="notion day">31</text></svg></div>
  <i class="divider"></i>
  <div class="app open"><svg><use href="#transmission" width="80" height="80" class="spill"/></svg></div>
  <div class="app open"><svg viewBox="0 0 80 80"><rect width="80" height="80" rx="18" fill="#f8f8fa"/><path d="M40 40L10.600 23A34 34 0 0 1 69.400 23z" fill="#da4b3c"/><path d="M40 23h29.400A34 34 0 0 1 40 74L55 48z" fill="#f1be42"/><path d="M10.600 23L25.500 48.500 40 57.500 54.700 48.500 40 74A34 34 0 0 1 10.600 23z" fill="#4f9f55"/><circle cx="40" cy="40" r="17" fill="#fff"/><circle cx="40" cy="40" r="13.500" fill="#3f7be6"/></svg></div>
  <div class="app open"><svg viewBox="0 0 80 80"><rect width="80" height="80" rx="18" fill="url(#g-cup)"/><path d="M19 22c8-3 14 1 20 1s8-4 14-4 9 2 9 7l-3 32c-9-2-15 6-32 4-3 0-4-2-4-4z" fill="#f8d3c5"/><path d="M37 22c5-4 20-5 24 2-4 5-18 4-24-2z" fill="#fbb78b"/></svg></div>
  <div class="app open"><svg viewBox="0 0 80 80"><rect x="-3" y="-3" width="86" height="86" rx="9" fill="#3f7d43" stroke="#26382a" stroke-width="2"/><path d="M7 3h65L41 75z" fill="#fff"/><text x="43" y="38" class="mu">µ</text><text x="64" y="72" class="five">5</text></svg></div>
  <div class="app open"><svg viewBox="0 0 80 80"><rect width="80" height="80" rx="18" fill="#f2f2f4"/><path d="M6 42V18A12 12 0 0 1 18 6h44a12 12 0 0 1 12 12v24z" fill="url(#g-sky)"/><path d="M6 42h68v20a12 12 0 0 1-12 12H18A12 12 0 0 1 6 62z" fill="#27406d"/><path d="M6 53l12-4 8 5 12-2 4 14-10 6-12-2-14-8z" fill="#cdd8e2"/><path d="M14 72l8-6 12 2 2 6H20z" fill="#9a7e5c"/><path d="M43 56h32l8 24q-24 8-48 0z" fill="#d9dadb" stroke="#8e9092" stroke-width="2"/><path d="M48 60h8l-6 18h-9zM64 60l8 18h-8z" fill="#fff" opacity=".8"/><path d="M52 62l7-3 4 6-8 5z" fill="#8b98a8"/><rect x="40" y="39" width="37" height="18" rx="5" fill="#111"/><ellipse cx="58.500" cy="41" rx="17" ry="3" fill="#444"/></svg></div>
  <i class="divider"></i>
  <div class="app"><svg viewBox="0 0 80 80"><path d="M3 10q0-5 5-5h14l6 6h43q6 0 6 6v44q0 6-6 6H9q-6 0-6-6z" fill="#4f9fd6"/><rect x="3" y="15" width="74" height="52" rx="5" fill="#7cc6f2"/><path d="M17-5h32l20 30v30H17z" fill="#ececec"/><path d="M10 5h39l21 22v58H10z" fill="#fff"/><path d="M49-5l21 32-21-5z" fill="#d0d0d0"/><use href="#transmission" x="22" y="27" width="37" height="37"/><text x="40" y="78" class="torrent">TORRENT</text></svg></div>
  <div class="app"><svg viewBox="0 0 80 80"><path d="M5 5l12-10 8 6 8-8 10 8 14-6 8 12 10 0-6 15H11z" fill="#dadada"/><path d="M20 8l9-7 8 9zM43 9l9-9 7 8z" fill="#50565c"/><path d="M30 4l8-3 6 8z" fill="#5fb7c9"/><path d="M5 3c10 14 60 14 70 0l-8 74c-1 9-53 9-54 0z" fill="url(#g-bin)" opacity=".93"/><path d="M5 3c10 14 60 14 70 0" fill="none" stroke="#f6f6f6" stroke-width="2"/></svg></div>
</footer>
</body>
</html>
```
FILE: styles.css
```css
* { box-sizing: border-box; margin: 0; padding: 0; }
body {
  width: 2940px; height: 1912px; overflow: hidden;
  display: flex; flex-direction: column;
  font-family: Inter, "Liberation Sans", sans-serif;
  letter-spacing: -0.022em;
  background:
    linear-gradient(97deg, #b3446f 0, #a13b6a 30%, #8b3060 55%, #73264f 75%, #5c1f44 100%) 0 0 / 100% 100px no-repeat,
    linear-gradient(90deg, #1a0616 0, #350f2b 120px, #3a1840 600px, #4b2358 850px, #47204f 940px, #301733 970px, #2a1530 1200px, #14122e 1260px, #191637 1480px, #2c1630 1700px, #1a1740 1960px, #362c66 2000px, #1f1545 2060px, #2a1a4e 2300px, #221b4d 2560px, #0f0c1e 2850px, #14113c 2940px);
}
svg { flex: none; display: block; overflow: visible; }
.defs { position: absolute; }
button { font: inherit; letter-spacing: inherit; border: 0; background: none; }
code { font-family: "DejaVu Sans Mono", "Liberation Mono", monospace; letter-spacing: 0; }

/* menu bar */
.menubar { height: 75px; display: flex; justify-content: space-between; color: #fff; font-size: 26px; text-shadow: 0 3px 6px rgba(0,0,0,.25); flex: none; }
.menus { display: grid; grid-template-columns: 69px 143px 84px 87px 101px 127px 177px 131px 84px 139px 100px; align-items: center; padding-left: 39px; height: 73px; font-weight: 500; letter-spacing: -0.036em; }
.menus b { font-weight: 700; }
.apple { width: 29px; height: 33px; margin-top: -4px; }
.status { display: grid; grid-template-columns: 66px 64px 64px 76px 64px 92px 73px 84px 62px 70px 303px; align-items: center; height: 73px; }
.status > * { justify-self: center; }
.status time { justify-self: start; padding-left: 15px; margin-top: -1px; display: flex; gap: 18px; font-weight: 500; letter-spacing: -0.03em; color: #f8eef3; white-space: nowrap; }
.mini-date { font: 700 19px "Liberation Serif", serif; fill: #f3e6ee; text-anchor: middle; letter-spacing: 0; }
.input-source { width: 44px; height: 32px; border: 2px solid #f3e6ee; border-radius: 6px; font-size: 22px; line-height: 28px; text-align: center; letter-spacing: 0; font-weight: 500; }

/* browser window */
.window { height: 1690px; flex: none; position: relative; z-index: 2; display: flex; flex-direction: column; border-top: 1px solid #000; border-bottom: 1px solid #000; border-radius: 22px 22px 20px 20px; overflow: hidden; background: #fff; }
.tabstrip { height: 80px; flex: none; position: relative; z-index: 1; background: #1f2121; display: flex; align-items: center; padding-top: 2px; box-shadow: inset 0 2px 0 #6d6f6f, inset 2px 0 0 #5c5e5e, inset -2px 0 0 #5c5e5e; border-radius: 22px 22px 0 0; font-size: 24px; color: #c9cbcb; }
.lights { width: 180px; padding-left: 42px; display: flex; gap: 16px; }
.lights i { width: 24px; height: 24px; border-radius: 50%; }
.red { background: #ec6a5e; } .amber { background: #f4bf4f; } .green { background: #61c454; }
.tab { width: 360.400px; height: 32px; padding-left: 20px; display: flex; align-items: center; border-right: 3px solid #474949; position: relative; }
.tab > span { width: 222px; margin-left: 17px; white-space: nowrap; line-height: 32px; margin-top: -2px; -webkit-mask-image: linear-gradient(90deg, #000 165px, transparent 222px); mask-image: linear-gradient(90deg, #000 165px, transparent 222px); }
.tab .x { width: 24px; height: 24px; margin-left: 19px; }
.tab.last { border-color: transparent; }
.tab.active { height: 68px; margin: 0 6px -8px 6px; width: 348px; padding: 0 0 8px 16px; border: 0; background: #3c3c3c; border-radius: 20px 20px 0 0; color: #e3e3e3; }
.tab.active::before, .tab.active::after { content: ""; position: absolute; bottom: 0; width: 24px; height: 24px; }
.tab.active::before { right: 100%; background: radial-gradient(circle at 0 0, transparent 23.500px, #3c3c3c 24px); }
.tab.active::after { left: 100%; background: radial-gradient(circle at 100% 0, transparent 23.500px, #3c3c3c 24px); }
.fav { width: 32px; height: 32px; }
.dim { color: #65686c; } .lit { color: #9da2a8; }
.arm { font: 700 15px Lato, sans-serif; fill: #fff; text-anchor: middle; letter-spacing: 0; }
.newtab { width: 24px; height: 24px; margin-left: 22px; }
.tabsearch { width: 56px; height: 56px; border-radius: 20px; background: #3c3c3c; margin-left: auto; margin-right: 12px; display: grid; place-items: center; }

.toolbar { height: 92px; flex: none; background: #3c3c3c; border-radius: 20px 20px 0 0; box-shadow: 0 -20px 0 #1f2121; display: flex; align-items: center; padding-left: 8px; }
.tool { width: 72px; height: 68px; display: grid; place-items: center; flex: none; }
.tool.ext { width: 80px; margin-left: 14px; }
.rule { width: 3px; height: 32px; background: #5e5e5e; border-radius: 2px; margin: 0 12px 0 11px; flex: none; }
.omnibox { width: 2356px; height: 68px; margin-left: 16px; border-radius: 34px; background: #282828; display: flex; align-items: center; padding-left: 10px; }
.site { width: 48px; height: 48px; border-radius: 50%; background: #3c3c3c; display: grid; place-items: center; }
.url { font-size: 28px; letter-spacing: 0.004em; color: #c7c7c7; margin-left: 16px; flex: 1; }
.url em { font-style: normal; color: #f0f0f0; }
.o1 { margin-right: 57px; } .o2 { margin-right: 35px; } .o3 { margin-right: 33px; }
.avatar { width: 50px; height: 50px; border-radius: 50%; background: #1f4c40; color: #fff; font-size: 26px; display: grid; place-items: center; }
.avatar.small { width: 40px; height: 40px; font-size: 20px; }

.bookmarks { height: 70px; flex: none; background: #3c3c3c; border-bottom: 2px solid #4a4a4a; padding: 0 0 12px 38px; display: grid; grid-template-columns: 28px 62px 164px 308px 178px 172px 308px 156px 274px 1fr 238px; align-items: center; font-size: 24px; color: #c7c7c7; letter-spacing: -0.015em; }
.bookmarks a { display: flex; align-items: center; gap: 12px; white-space: nowrap; }
.bookmarks .rule { margin-left: 31px; }
.bookmarks .rule.end { justify-self: end; margin-right: 32px; }
.bookmarks .all { gap: 16px; }

/* page */
.page { flex: 1; display: flex; min-height: 0; color: #0d0d0d; font-size: 25.200px; }
.sidebar { width: 468px; flex: none; background: #f9f9f9; border-right: 1.500px solid #ececec; padding: 0 15px 0 16px; display: flex; flex-direction: column; }
.side-head { height: 100px; margin-bottom: 15px; display: flex; align-items: center; justify-content: space-between; padding: 0 19px 0 15px; }
.group { margin-bottom: 36.200px; letter-spacing: -0.020em; }
.group a, .group h3 { height: 64.800px; display: flex; align-items: center; padding-left: 18px; gap: 11px; font-weight: 400; white-space: nowrap; border-radius: 18px; font-size: 25.200px; }
.group h3 { color: #8f8f8f; }
.current { background: #e9e9e9; }
.ico { width: 32px; height: 32px; }
.upgrade { display: flex; align-items: center; gap: 14px; padding-left: 18px; margin-top: -12px; height: 76px; }
.badge { width: 51px; height: 51px; border: 1.500px solid #e3e3e3; border-radius: 50%; display: grid; place-items: center; }
.upgrade strong, .upgrade small { display: block; font-weight: 400; line-height: 33px; }
.upgrade small { font-size: 21.600px; color: #8f8f8f; letter-spacing: -0.003em; white-space: nowrap; }

.chat { flex: 1; display: grid; grid-template-columns: 545px 1382.400px 1fr; min-width: 0; }
.model { height: 100px; padding-left: 43px; display: flex; align-items: center; gap: 12px; font-size: 32.400px; letter-spacing: -0.030em; }
.account { height: 101px; padding-left: 183px; display: flex; align-items: center; }
.share { width: 160px; height: 70px; border: 1.500px solid #dcdcdc; border-radius: 35px; display: flex; align-items: center; justify-content: center; gap: 13px; font-size: 25.200px; font-weight: 500; color: #0d0d0d; }
.more { margin: 0 58px 0 46px; }

.thread { display: flex; flex-direction: column; min-width: 0; }
.conversation { height: 1230px; overflow: hidden; flex: none; }
.conversation p { margin-top: -34.600px; font-size: 28.800px; line-height: 50.400px; white-space: nowrap; }
.conversation p strong { font-weight: 600; letter-spacing: -0.016em; }
code { background: #ececec; border-radius: 7px; padding: 5px 8.600px; font-size: .875em; }
hr { border: 0; height: 2px; background: #f2f2f2; margin-top: 68px; }
hr.wide { margin-top: 95.500px; }
h2 { height: 60px; margin-top: 71px; display: flex; align-items: center; gap: 9px; font-size: 43.200px; font-weight: 650; letter-spacing: -0.039em; white-space: nowrap; }
table { width: 100%; margin-top: 27px; border-collapse: separate; border-spacing: 0; table-layout: fixed; font-size: 25.200px; letter-spacing: -0.021em; }
th { height: 59px; text-align: left; font-weight: 600; border-bottom: 2px solid #d9d9d9; letter-spacing: -0.012em; }
th:nth-child(1) { width: 364px; } th:nth-child(2) { width: 523px; }
td:nth-child(3) { letter-spacing: -0.016em; }
.last-head { display: flex; justify-content: space-between; align-items: center; padding-right: 9px; }
td { height: 80.150px; border-bottom: 2px solid #f3f3f3; }
tr:last-child td { border-bottom-color: transparent; }
td code { padding: 4px 8.600px; }

.composer { position: relative; margin: -26px 0 0; height: 184px; flex: none; border: 1.500px solid #cfcfcf; border-radius: 50px; background: #fff; box-shadow: 0 8px 16px rgba(0,0,0,.05); padding: 25px 20px 0 33px; }
.down { position: absolute; left: 660.500px; top: -72px; width: 58px; height: 58px; border-radius: 50%; border: 1.500px solid #e5e5e5; background: #fff; display: grid; place-items: center; }
.ask { height: 44px; display: flex; justify-content: space-between; align-items: center; font-size: 28.800px; color: #8f8f8f; padding-right: 11px; }
.assist { width: 87px; height: 44px; border-radius: 22px; overflow: hidden; display: flex; background: #fff; box-shadow: 0 2px 6px rgba(0,0,0,.3); }
.assist span { flex: 1; display: grid; place-items: center; }
.bot { background: #39874d; }
.actions { display: flex; align-items: center; height: 66px; margin-top: 27px; }
.plus { margin-left: 7px; } .sliders { margin-left: 38px; }
.actions span { margin-left: 14px; }
.mic { margin-left: auto; margin-right: 32px; }
.voice { width: 65px; height: 65px; border-radius: 50%; background: #000; display: grid; place-items: center; }
.notice { height: 58px; line-height: 58px; text-align: center; font-size: 21.600px; color: #5d5d5d; letter-spacing: -0.002em; }

.behind { height: 39px; margin: -30px 2px 0; flex: none; border-radius: 0 0 22px 22px; background: #333; }

/* dock */
.dock { position: relative; z-index: 3; width: 2763px; height: 128px; margin-left: 88px; flex: none; display: flex; align-items: flex-start; padding: 19px 0 0 2.600px; border-radius: 42px; border: 2px solid rgba(255,255,255,.22);
  background: linear-gradient(90deg, #7d5c76 0, #8c628a 350px, #91659a 800px, #86647e 950px, #74647c 1060px, #64607c 1280px, #6a658e 1450px, #6e6274 1560px, #68658e 1750px, #7370a2 1900px, #77608f 2050px, #706c96 2250px, #7566a0 2450px, #6c5e88 2600px, #66606f 2763px);
  box-shadow: 0 0 90px rgba(0,0,0,.28); }
.app { width: 106.250px; height: 109px; position: relative; display: flex; flex-direction: column; align-items: center; flex: none; margin-top: -2px; }
.app > svg { width: 80px; height: 80px; filter: drop-shadow(0 1px 2px rgba(0,0,0,.35)); }
.app.open::after { content: ""; width: 8px; height: 8px; border-radius: 50%; background: #08040f; margin-top: 17px; }
.divider { width: 2px; height: 96px; margin: -4px 23px 0; background: #3f3566; flex: none; }
.count { position: absolute; left: 67px; top: -9px; width: 38px; height: 38px; border-radius: 50%; background: #df4b40; color: #fff; font-size: 22px; line-height: 38px; text-align: center; }
.spill { overflow: visible; }
symbol { overflow: visible; }
.app text { text-anchor: middle; letter-spacing: 0; }
.cal-month { font: 600 14px Inter, sans-serif; fill: #fff; }
.cal-day { font: 300 43px Inter, sans-serif; fill: #2a2a2a; }
.notion { font: 700 54px "Liberation Serif", serif; }
.notion.day { font-size: 43px; letter-spacing: -1px; }
.mu { font: 700 50px "DejaVu Sans", sans-serif; fill: #2f7a38; }
.five { font: 700 32px "Noto Sans", sans-serif; fill: #fff; }
.torrent { font: 400 12px "Open Sans", sans-serif; fill: #555; }
```
